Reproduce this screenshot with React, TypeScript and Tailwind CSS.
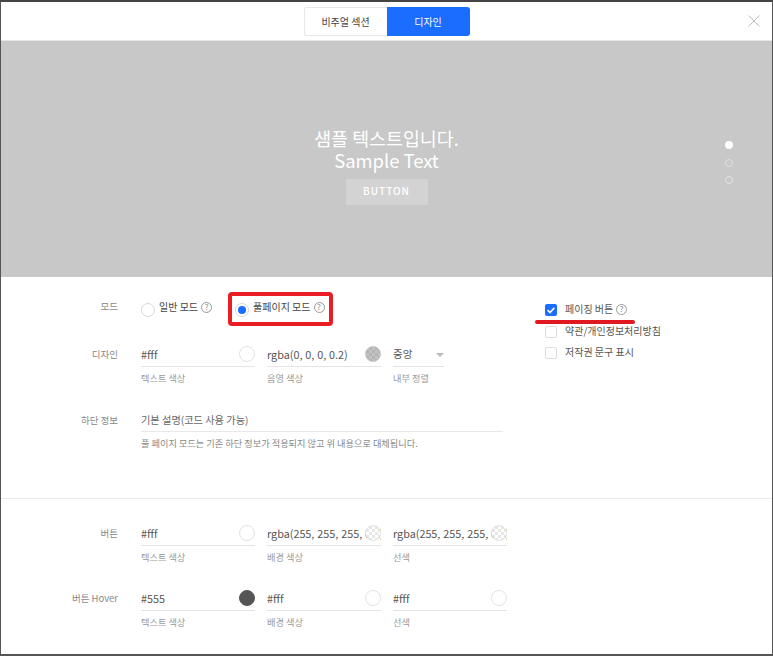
import React from "react";

const font = "font-['Noto_Sans_CJK_KR','Noto_Sans',sans-serif]";

type Swatch = "white" | "dark" | "shadow" | "clear";

const swatchClass: Record<Swatch, string> = {
  white: "bg-white border border-[#e2e2e2]",
  dark: "bg-[#555] border border-[#555]",
  shadow:
    "border border-[#c4c4c4] bg-[repeating-conic-gradient(#b4b4b4_0_25%,#c2c2c2_0_50%)] bg-[length:6px_6px]",
  clear:
    "border border-[#e2e2e2] bg-[repeating-conic-gradient(#e6e6e6_0_25%,#ffffff_0_50%)] bg-[length:6px_6px]",
};

const ColorField = ({
  value,
  label,
  swatch,
}: {
  value: string;
  label: string;
  swatch: Swatch;
}) => (
  <div className="w-[114px] shrink-0">
    <div className="relative h-[22px] border-b border-[#e4e4e4] overflow-hidden">
      <div className="text-[10.8px] leading-[18px] text-[#555] whitespace-nowrap overflow-hidden [word-spacing:0.5px]">
        {value}
      </div>
      <span className={`absolute right-0 top-[1px] w-4 h-4 rounded-full ${swatchClass[swatch]}`} />
    </div>
    <div className="mt-[4px] mb-[1px] text-[9.2px] leading-[14px] text-[#999]">{label}</div>
  </div>
);

const Help = () => (
  <span className="ml-[3px] inline-flex w-[11px] h-[11px] items-center justify-center rounded-full border border-[#999] text-[8px] leading-none text-[#888]">
    ?
  </span>
);

const Radio = ({ label, checked }: { label: string; checked?: boolean }) => (
  <div className="flex items-center">
    <span className="w-[14px] h-[14px] rounded-full border border-[#d8d8d8] bg-white flex items-center justify-center">
      {checked && <span className="w-2 h-2 rounded-full bg-[#1a6dff]" />}
    </span>
    <span className="ml-[4px] text-[10px] leading-[14px] text-[#444] -translate-y-[3px]">{label}</span>
    <span className="-translate-y-[3px] inline-flex">
      <Help />
    </span>
  </div>
);

const Check = ({ label, checked, help }: { label: string; checked?: boolean; help?: boolean }) => (
  <div className="flex items-center h-[12px]">
    <span
      className={`w-[12px] h-[12px] rounded-[2px] flex items-center justify-center ${
        checked ? "bg-[#1a6dff]" : "bg-white border border-[#dcdcdc]"
      }`}
    >
      {checked && (
        <svg viewBox="0 0 12 12" className="w-[12px] h-[12px]" fill="none" stroke="#fff" strokeWidth="1.6">
          <path d="M2.6 6.2 5 8.5 9.4 3.8" />
        </svg>
      )}
    </span>
    <span className="ml-2 text-[10px] leading-[14px] text-[#555] -translate-y-[1px] whitespace-nowrap">{label}</span>
    {help && (
      <span className="-translate-y-[1px] inline-flex">
        <Help />
      </span>
    )}
  </div>
);

const Label = ({ children }: { children: React.ReactNode }) => (
  <div className="w-[117px] shrink-0 pt-[2px] text-right text-[9.5px] leading-[14px] text-[#888]">{children}</div>
);

export default function App() {
  return (
    <div
      className={`${font} relative w-[773px] h-[656px] overflow-hidden bg-white border-x border-t-2 border-b-2 border-x-[#555] border-t-[#444] border-b-[#555]`}
    >
      {/* Tabs */}
      <div className="relative h-[39px] border-b border-[#e6e6e6] flex justify-center pt-[5px]">
        <div className="flex h-[29px] text-[10px]">
          <div className="w-[83px] flex items-center justify-center bg-white border border-[#e8e8e8] border-r-0 rounded-l-[3px] text-[#444]">
            비주얼 섹션
          </div>
          <div className="w-[83px] flex items-center justify-center bg-[#1a6dff] rounded-r-[3px] text-white">
            디자인
          </div>
        </div>
        <button className="absolute right-[12px] top-[13px]">
          <svg viewBox="0 0 12 12" className="w-3 h-3 block" fill="none" stroke="#aaa" strokeWidth="0.8">
            <path d="M0.5 0.5 11.5 11.5M11.5 0.5 0.5 11.5" />
          </svg>
        </button>
      </div>

      {/* Preview */}
      <div className="relative h-[236px] bg-[#c8c8c8] flex flex-col items-center">
        <div className="mt-[86px] text-[18.4px] leading-[22px] text-white text-center">
          샘플 텍스트입니다.
          <br />
          Sample Text
        </div>
        <div className="mt-[8px] w-[82px] h-[26px] pb-[4px] bg-[#d3d3d3] flex items-center justify-center text-[10px] font-medium tracking-[1px] text-white">
          BUTTON
        </div>
        <div className="absolute right-[39px] top-[100px] flex flex-col gap-[9.5px]">
          <span className="w-2 h-2 rounded-full bg-white" />
          <span className="w-2 h-2 rounded-full border border-[#e2e2e2]" />
          <span className="w-2 h-2 rounded-full border border-[#e2e2e2]" />
        </div>
      </div>

      {/* Form top */}
      <div className="relative h-[222px] border-b border-[#eaeaea] flex">
        <div className="w-[534px] shrink-0 pt-[20px]">
          <div className="flex">
            <Label>모드</Label>
            <div className="ml-[23px] flex gap-[23px] pt-[6px]">
              <Radio label="일반 모드" />
              <Radio label="풀페이지 모드" checked />
            </div>
          </div>

          <div className="flex mt-[28px]">
            <Label>디자인</Label>
            <div className="ml-[23px] flex gap-3">
              <ColorField value="#fff" label="텍스트 색상" swatch="white" />
              <ColorField value="rgba(0, 0, 0, 0.2)" label="음영 색상" swatch="shadow" />
              <div className="w-[51px] shrink-0">
                <div className="relative h-[22px] border-b border-[#e4e4e4] text-[10.5px] leading-[18px] text-[#555]">
                  중앙
                  <span className="absolute right-0 top-[8px] w-0 h-0 border-x-[4px] border-x-transparent border-t-[4px] border-t-[#bbb]" />
                </div>
                <div className="mt-[4px] mb-[1px] text-[9.2px] leading-[14px] text-[#999] whitespace-nowrap">내부 정렬</div>
              </div>
            </div>
          </div>

          <div className="flex mt-[25px]">
            <Label>하단 정보</Label>
            <div className="ml-[23px] w-[362px]">
              <div className="h-[21px] border-b border-[#e8e8e8] text-[10.2px] leading-[17px] text-[#666]">
                기본 설명(코드 사용 가능)
              </div>
              <div className="mt-[4px] text-[9.2px] leading-[14px] text-[#888] whitespace-nowrap">
                풀 페이지 모드는 기존 하단 정보가 적용되지 않고 위 내용으로 대체됩니다.
              </div>
            </div>
          </div>
        </div>

        <div className="pt-[27px] pl-[10px] flex flex-col gap-[9.5px]">
          <Check label="페이징 버튼" checked help />
          <Check label="약관/개인정보처리방침" />
          <Check label="저작권 문구 표시" />
        </div>

        {/* annotations */}
        <div className="absolute left-[227px] top-[15px] w-[105px] h-[34px] border-[4px] border-[#ea1c24] rounded-[4px]" />
        <div className="absolute left-[534px] top-[43px] w-[100px] h-[4px] rounded-full bg-[#e01820]" />
      </div>

      {/* Form bottom */}
      <div className="pt-[25px]">
        <div className="flex">
          <Label>버튼</Label>
          <div className="ml-[23px] flex gap-3">
            <ColorField value="#fff" label="텍스트 색상" swatch="white" />
            <ColorField value="rgba(255, 255, 255, 0.2)" label="배경 색상" swatch="clear" />
            <ColorField value="rgba(255, 255, 255, 0.2)" label="선색" swatch="clear" />
          </div>
        </div>
        <div className="flex mt-[24px]">
          <Label>버튼 Hover</Label>
          <div className="ml-[23px] flex gap-3">
            <ColorField value="#555" label="텍스트 색상" swatch="dark" />
            <ColorField value="#fff" label="배경 색상" swatch="white" />
            <ColorField value="#fff" label="선색" swatch="white" />
          </div>
        </div>
      </div>
    </div>
  );
}
